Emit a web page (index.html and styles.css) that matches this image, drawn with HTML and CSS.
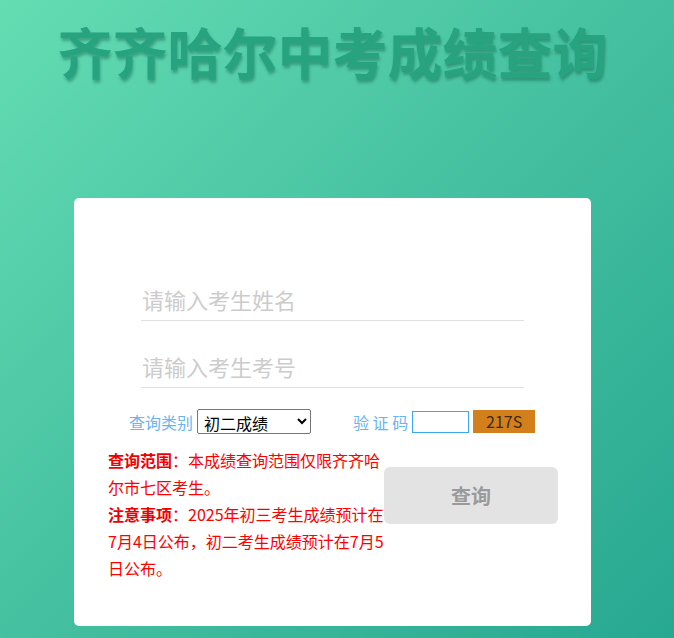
FILE: index.html
```html
<!DOCTYPE html>
<html lang="zh-CN">
<head>
    <meta charset="UTF-8">
    <meta name="viewport" content="width=device-width, initial-scale=1.0">
    <title>齐齐哈尔中考成绩查询</title>
    <link rel="stylesheet" href="styles.css">
</head>
<body>
    <h1 class="title">齐齐哈尔中考成绩查询</h1>
    <div class="card">
        <div class="form">
            <input type="text" class="field" placeholder="请输入考生姓名">
            <input type="text" class="field" placeholder="请输入考生考号">
        </div>
        <div class="options">
            <span class="label">查询类别</span>
            <select class="kind">
                <option>初二成绩</option>
                <option>初三成绩</option>
            </select>
            <span class="label code-label">验 证 码</span>
            <input type="text" class="code-input">
            <span class="code">217S</span>
        </div>
        <div class="bottom">
            <div class="notes">
                <p><b>查询范围</b>：本成绩查询范围仅限齐齐哈尔市七区考生。</p>
                <p><b>注意事项</b>：2025年初三考生成绩预计在7月4日公布，初二考生成绩预计在7月5日公布。</p>
            </div>
            <button class="search-btn">查询</button>
        </div>
    </div>
</body>
</html>
```

FILE: styles.css
```css
body {
    font-family: "Noto Sans CJK SC", "Noto Sans", sans-serif;
    margin: 0;
    padding: 0;
    height: 100vh;
    background: linear-gradient(135deg, #64ddb3 0%, #45c0a0 50%, #27a891 100%);
    overflow: hidden;
}

.title {
    margin: 10px 0 0 0;
    line-height: 80px;
    text-align: center;
    font-size: 55px;
    font-weight: bold;
    color: #27a380;
    text-shadow: 1px 3px 3px rgba(0, 70, 50, 0.35);
    padding-right: 9px;
}

.card {
    background-color: white;
    width: 517px;
    height: 428px;
    margin: 108px 0 0 74px;
    border-radius: 5px;
    box-sizing: border-box;
    padding-top: 82px;
}

.form {
    display: flex;
    flex-direction: column;
    gap: 26px;
    margin-left: 67px;
    width: 383px;
}

.field {
    height: 41px;
    box-sizing: border-box;
    border: none;
    border-bottom: 1px solid #e0e0e0;
    outline: none;
    font-family: inherit;
    font-size: 22px;
    padding: 0 0 2px 1px;
    color: #333;
}

.field::placeholder {
    color: #cccccc;
}

.options {
    display: flex;
    align-items: center;
    margin: 21px 0 0 55px;
    height: 25px;
}

.label {
    color: #6ab4f2;
    font-size: 16px;
    margin-right: 4px;
}

.kind {
    width: 114px;
    height: 25px;
    font-family: inherit;
    font-size: 16px;
    color: #000;
    border: 1px solid #767676;
    border-radius: 2px;
    background: white;
    padding: 0 2px;
}

.code-label {
    margin-left: 42px;
}

.code-input {
    width: 57px;
    height: 22px;
    box-sizing: border-box;
    border: 1px solid #3aa8f0;
    outline: none;
    margin-left: 0;
}

.code {
    width: 62px;
    height: 23px;
    line-height: 23px;
    margin-left: 4px;
    background-color: #d27f1c;
    color: #3a2a18;
    font-size: 16px;
    text-align: center;
}

.bottom {
    display: flex;
    margin: 13px 0 0 34px;
}

.notes {
    width: 276px;
    color: #ff0000;
    font-size: 16px;
    line-height: 27px;
}

.notes p {
    margin: 0;
}

.notes b {
    color: #ee0000;
}

.search-btn {
    width: 174px;
    height: 57px;
    margin-top: 20px;
    background-color: #e3e3e3;
    border: none;
    border-radius: 6px;
    font-family: inherit;
    font-size: 20px;
    font-weight: bold;
    color: #9a9a9a;
    cursor: pointer;
}
```
